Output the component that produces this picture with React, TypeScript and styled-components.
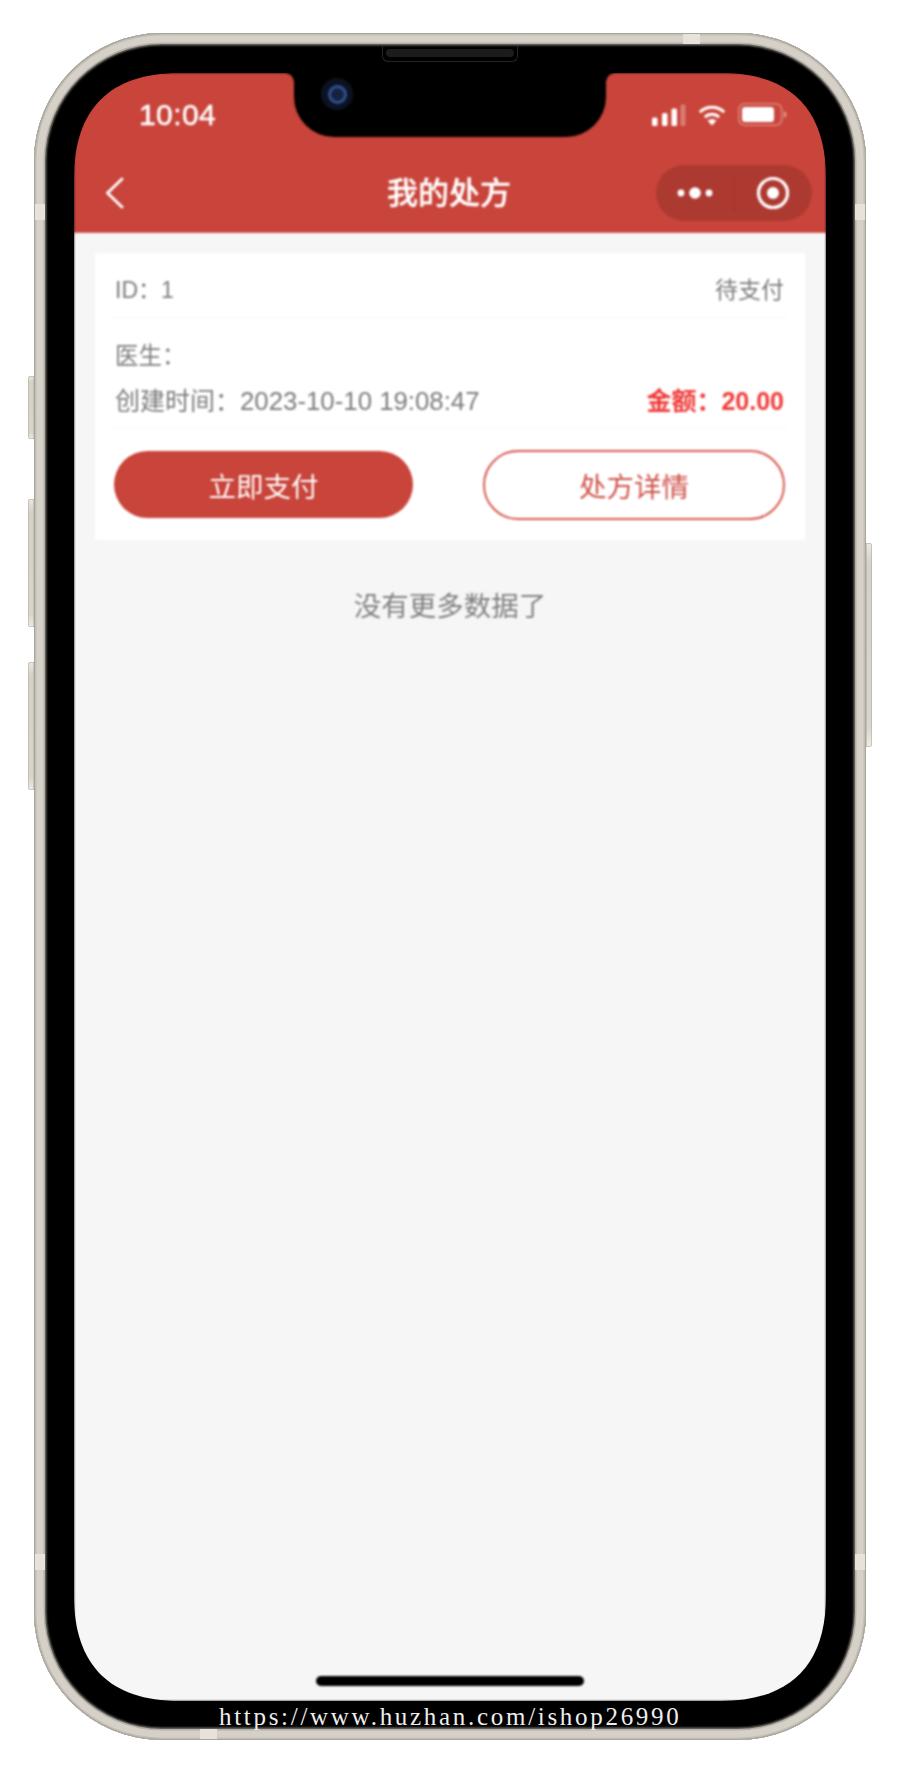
import { createGlobalStyle } from "styled-components";
import styled from "styled-components";

const RED = "#c9443a";

const GlobalStyle = createGlobalStyle`
  html, body {
    margin: 0;
    padding: 0;
    background: #fff;
  }
  * {
    box-sizing: border-box;
  }
`;

const Page = styled.div`
  width: 900px;
  height: 1774px;
  padding: 33px 34px 34px;
  background: #fff;
  font-family: "Liberation Sans", "Noto Sans CJK SC", sans-serif;
  overflow: hidden;
`;

const Phone = styled.div`
  position: relative;
  width: 832px;
  height: 1707px;
  padding: 40px 40px 39px;
  border-radius: 128px;
  background: #000;
  box-shadow:
    inset 0 0 0 1px #a9a59c,
    inset 0 0 0 2.5px #c4bfb5,
    inset 0 0 0 9.5px #d6d1c8,
    inset 0 0 0 11px #b5b0a7,
    inset 0 0 2px 12.5px #6f6c65;
`;

const SideKey = styled.div<{ $side: "left" | "right"; $top: number; $height: number }>`
  position: absolute;
  top: ${(p) => p.$top}px;
  ${(p) => p.$side}: -6px;
  width: 6px;
  height: ${(p) => p.$height}px;
  border-radius: ${(p) => (p.$side === "left" ? "3px 0 0 3px" : "0 3px 3px 0")};
  background: linear-gradient(#ece8e0, #d6d1c8 10%, #dad5cc 90%, #efebe4);
  box-shadow: inset 0 0 0 0.5px #aca79d;
`;

const Band = styled.div<{ $edge: "left" | "right"; $top: number }>`
  position: absolute;
  top: ${(p) => p.$top}px;
  ${(p) => p.$edge}: 1px;
  width: 10px;
  height: 16px;
  background: #e7e3da;
`;

const FlatBand = styled.div<{ $edge: "top" | "bottom"; $left: number }>`
  position: absolute;
  left: ${(p) => p.$left}px;
  ${(p) => p.$edge}: 1px;
  width: 17px;
  height: 10px;
  background: #e7e3da;
`;

const Speaker = styled.div`
  position: absolute;
  top: 13px;
  left: 348px;
  width: 136px;
  height: 16px;
  padding: 3px;
  border: 1px solid #242424;
  border-top: none;
  border-radius: 0 0 6px 6px;
  &::after {
    content: "";
    display: block;
    height: 8px;
    border-radius: 4px;
    background: #1c1c1c;
  }
`;

const Screen = styled.div`
  position: relative;
  width: 752px;
  height: 1628px;
  overflow: hidden;
  background: #f6f6f6;
  display: flex;
  flex-direction: column;
  filter: blur(0.8px);
  clip-path: path("M105 0 H647 C716 0 752 36 752 105 V1523 C752 1592 716 1628 647 1628 H105 C36 1628 0 1592 0 1523 V105 C0 36 36 0 105 0 Z");
`;

const Header = styled.header`
  background: ${RED};
  color: #fff;
`;

const StatusBar = styled.div`
  height: 64px;
  padding: 25px 39px 0 65px;
  display: flex;
  justify-content: space-between;
  align-items: flex-start;
`;

const Clock = styled.span`
  font-size: 30px;
  line-height: 34px;
  font-weight: 400;
  letter-spacing: 0.4px;
  -webkit-text-stroke: 0.5px #fff;
`;

const StatusIcons = styled.div`
  display: flex;
  align-items: center;
  gap: 12px;
  margin-top: 5px;
`;

const Notch = styled.div`
  position: absolute;
  top: 0;
  left: 220px;
  width: 312px;
  height: 64px;
  background: #000;
  border-radius: 0 0 40px 40px;
  &::before,
  &::after {
    content: "";
    position: absolute;
    top: 0;
    width: 9px;
    height: 9px;
  }
  &::before {
    left: -9px;
    background: radial-gradient(circle at 0 100%, transparent 8.5px, #000 9px);
  }
  &::after {
    right: -9px;
    background: radial-gradient(circle at 100% 100%, transparent 8.5px, #000 9px);
  }
`;

const Camera = styled.div`
  position: absolute;
  top: 5px;
  left: 27px;
  width: 32px;
  height: 32px;
  border-radius: 50%;
  background: #0c1320;
  display: flex;
  align-items: center;
  justify-content: center;
  &::after {
    content: "";
    width: 13px;
    height: 13px;
    border-radius: 50%;
    border: 3.5px solid #2f4f93;
    background: #16233f;
  }
`;

const NavBar = styled.nav`
  height: 96px;
  padding: 28px 14px 12px 32px;
  display: flex;
  align-items: center;
  justify-content: space-between;
  border-bottom: 1px solid #d4685f;
  position: relative;
`;

const Title = styled.h1`
  position: absolute;
  left: 0;
  right: 2px;
  top: 38px;
  margin: 0;
  text-align: center;
  font-size: 31px;
  line-height: 38px;
  font-weight: 500;
  -webkit-text-stroke: 0.3px #fff;
`;

const Capsule = styled.div`
  width: 156px;
  height: 56px;
  border-radius: 28px;
  background: #ad3a31;
  display: flex;
  align-items: center;
`;

const CapsulePart = styled.div`
  flex: 1;
  display: flex;
  align-items: center;
  justify-content: center;
`;

const CapsuleLine = styled.div`
  width: 1px;
  height: 38px;
  background: #a23329;
`;

const List = styled.main`
  padding: 20px 21px 0;
  flex: 1;
`;

const Card = styled.section`
  height: 287px;
  padding: 0 19px 0 17px;
  background: #fff;
  color: #7c7c7c;
  font-size: 25px;
`;

const TopRow = styled.div`
  height: 65px;
  padding: 5px 2px 0 3px;
  border-bottom: 1px solid #f6f6f6;
  font-size: 23px;
  display: flex;
  align-items: center;
  justify-content: space-between;
`;

const InfoBlock = styled.div`
  height: 111px;
  padding: 16px 2px 4px 3px;
  border-bottom: 1px solid #f6f6f6;
`;

const InfoRow = styled.div<{ $small?: boolean }>`
  height: 45px;
  line-height: 45px;
  font-size: ${(p) => (p.$small ? 23.5 : 25)}px;
  display: flex;
  justify-content: space-between;
`;

const DateValue = styled.span`
  font-size: 25.8px;
`;

const Amount = styled.span`
  color: #ef3a38;
  font-weight: 700;
`;

const Actions = styled.div`
  height: 111px;
  padding: 0 0 0 2px;
  margin-right: 1px;
  display: flex;
  align-items: center;
  justify-content: space-between;
`;

const ActionButton = styled.button<{ $outline?: boolean }>`
  width: ${(p) => (p.$outline ? 302 : 299)}px;
  height: ${(p) => (p.$outline ? 70 : 67)}px;
  padding: 0;
  border-radius: 35px;
  border: ${(p) => (p.$outline ? "2px solid #d9584f" : "none")};
  background: ${(p) => (p.$outline ? "#fff" : RED)};
  color: ${(p) => (p.$outline ? "#cf5249" : "#fff")};
  font-family: inherit;
  font-size: 27.5px;
`;

const NoMore = styled.p`
  margin: 47px 0 0;
  text-align: center;
  color: #818181;
  font-size: 27.5px;
  line-height: 40px;
`;

const HomeBar = styled.div`
  position: absolute;
  left: 242px;
  bottom: 15px;
  width: 268px;
  height: 10px;
  border-radius: 5px;
  background: #000;
`;

const Watermark = styled.div`
  position: absolute;
  left: 185px;
  top: 1670px;
  color: #eeeeee;
  font-family: "Liberation Serif", serif;
  font-size: 25px;
  letter-spacing: 2.7px;
  line-height: 28px;
  white-space: nowrap;
`;

function SignalIcon() {
  return (
    <svg width="34" height="22" viewBox="0 0 34 22">
      <rect x="0" y="13.500" width="5.500" height="8.500" rx="1.500" fill="#fff" />
      <rect x="10" y="9" width="5.500" height="13" rx="1.500" fill="#fff" />
      <rect x="19.500" y="4.500" width="5.500" height="17.500" rx="1.500" fill="#fff" />
      <rect x="28.500" y="0.500" width="5" height="21.500" rx="1.500" fill="#fff" opacity="0.3" />
    </svg>
  );
}

function WifiIcon() {
  return (
    <svg width="28" height="22" viewBox="0 0 28 22" fill="none" stroke="#fff" strokeWidth="3">
      <path d="M1.800 8.200a17.500 17.500 0 0 1 24.400 0" />
      <path d="M6.800 13.300a10.200 10.200 0 0 1 14.400 0" />
      <path d="M14 21.500l-4.300-4.800a6 6 0 0 1 8.600 0z" fill="#fff" stroke="none" />
    </svg>
  );
}

function BatteryIcon() {
  return (
    <svg width="49" height="23" viewBox="0 0 49 23" fill="none">
      <rect x="0.800" y="0.800" width="43" height="21.400" rx="6" stroke="#fff" strokeOpacity="0.35" strokeWidth="1.600" />
      <rect x="4" y="4" width="32" height="15" rx="3" fill="#fff" />
      <path d="M46 8v7c1.600-.5 2.600-2 2.600-3.500S47.600 8.500 46 8z" fill="#fff" fillOpacity="0.45" />
    </svg>
  );
}

function BackIcon() {
  return (
    <svg width="18" height="32" viewBox="0 0 18 32" fill="none" stroke="#fff" strokeWidth="2.800" strokeLinecap="round">
      <path d="M16 2L1.500 16 16 30" />
    </svg>
  );
}

function MoreIcon() {
  return (
    <svg width="36" height="14" viewBox="0 0 36 14" fill="#fff">
      <circle cx="4" cy="7" r="3.400" />
      <circle cx="18" cy="7" r="5.800" />
      <circle cx="32" cy="7" r="3.400" />
    </svg>
  );
}

function RecordIcon() {
  return (
    <svg width="34" height="34" viewBox="0 0 34 34" fill="none">
      <circle cx="17" cy="17" r="14.500" stroke="#fff" strokeWidth="3.200" />
      <circle cx="17" cy="17" r="6" fill="#fff" />
    </svg>
  );
}

export default function App() {
  return (
    <Page>
      <GlobalStyle />
      <Phone>
        <SideKey $side="left" $top={343} $height={63} />
        <SideKey $side="left" $top={466} $height={128} />
        <SideKey $side="left" $top={629} $height={128} />
        <SideKey $side="right" $top={510} $height={204} />
        <Band $edge="left" $top={171} />
        <Band $edge="right" $top={171} />
        <Band $edge="left" $top={1521} />
        <Band $edge="right" $top={1521} />
        <FlatBand $edge="top" $left={649} />
        <FlatBand $edge="bottom" $left={166} />
        <Speaker />
        <Screen>
          <Header>
            <StatusBar>
              <Clock>10:04</Clock>
              <StatusIcons>
                <SignalIcon />
                <WifiIcon />
                <BatteryIcon />
              </StatusIcons>
            </StatusBar>
            <NavBar>
              <BackIcon />
              <Title>我的处方</Title>
              <Capsule>
                <CapsulePart>
                  <MoreIcon />
                </CapsulePart>
                <CapsuleLine />
                <CapsulePart>
                  <RecordIcon />
                </CapsulePart>
              </Capsule>
            </NavBar>
          </Header>
          <List>
            <Card>
              <TopRow>
                <span>ID：1</span>
                <span>待支付</span>
              </TopRow>
              <InfoBlock>
                <InfoRow $small>
                  <span>医生：</span>
                </InfoRow>
                <InfoRow>
                  <span>
                    创建时间：<DateValue>2023-10-10 19:08:47</DateValue>
                  </span>
                  <Amount>金额：20.00</Amount>
                </InfoRow>
              </InfoBlock>
              <Actions>
                <ActionButton>立即支付</ActionButton>
                <ActionButton $outline>处方详情</ActionButton>
              </Actions>
            </Card>
            <NoMore>没有更多数据了</NoMore>
          </List>
          <Notch>
            <Camera />
          </Notch>
          <HomeBar />
        </Screen>
        <Watermark>https://www.huzhan.com/ishop26990</Watermark>
      </Phone>
    </Page>
  );
}
